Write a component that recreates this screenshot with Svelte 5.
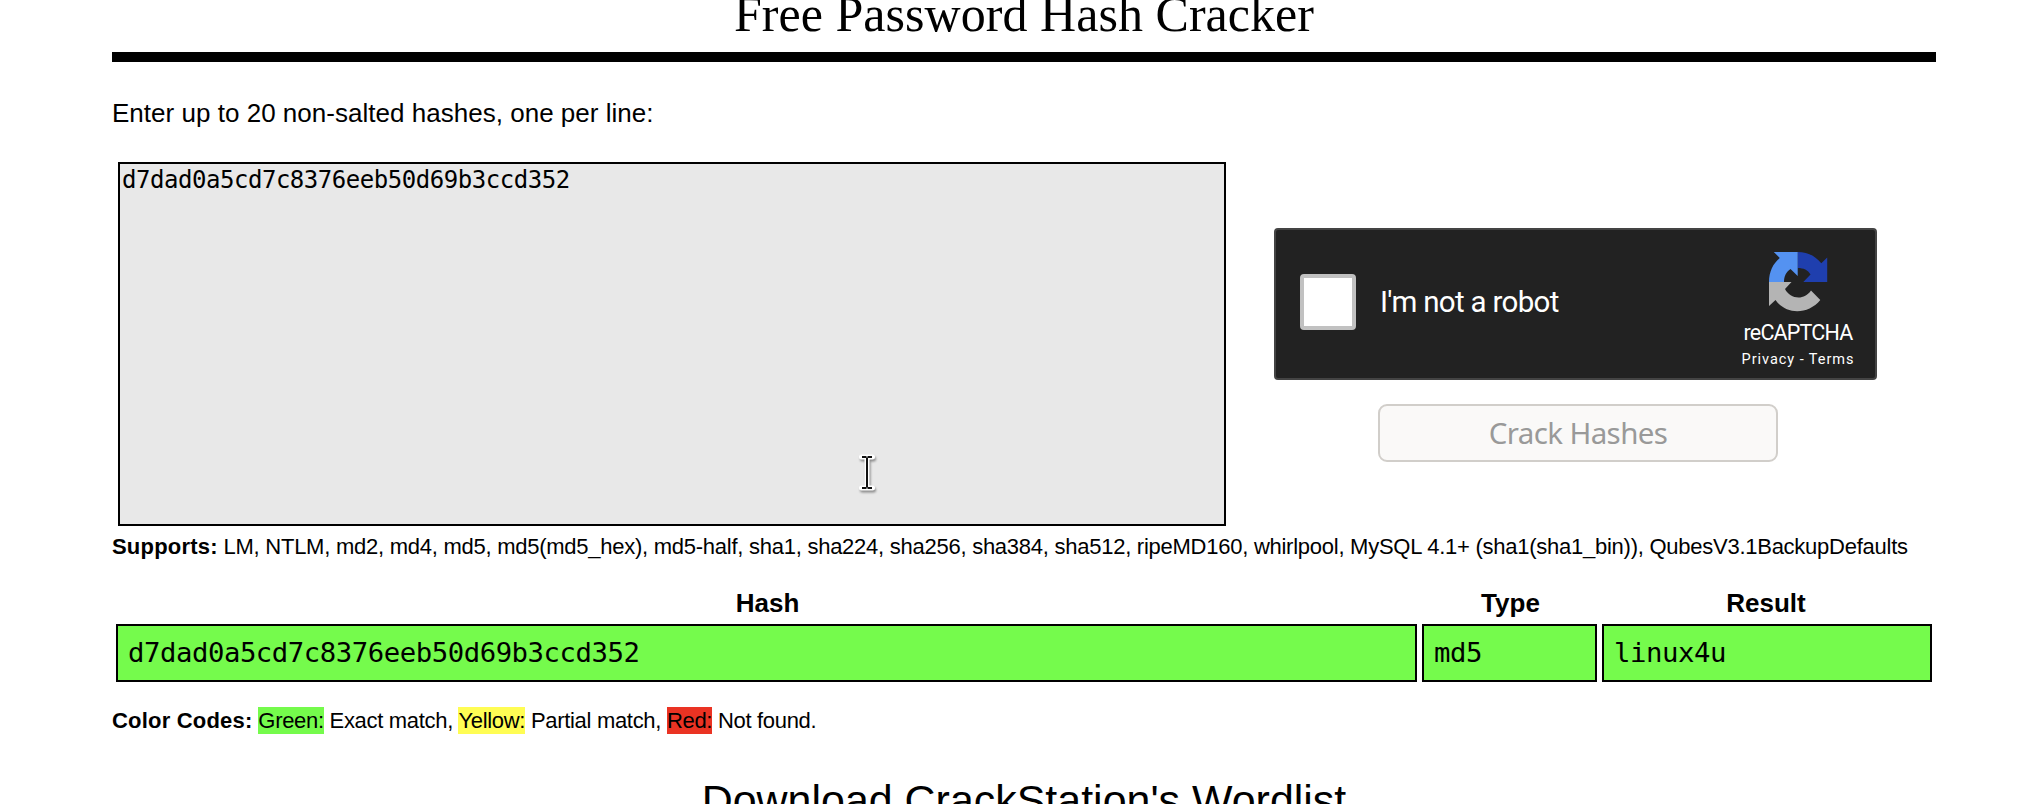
<script>
  const columns = ['Hash', 'Type', 'Result'];
  const row = ['d7dad0a5cd7c8376eeb50d69b3ccd352', 'md5', 'linux4u'];
</script>

<main>
  <h1>Free Password Hash Cracker</h1>
  <p class="intro">Enter up to 20 non-salted hashes, one per line:</p>

  <section class="entry">
    <div class="hashes">{row[0]}</div>
    <div class="side">
      <div class="captcha">
        <span class="box"></span>
        <span class="label">I'm not a robot</span>
        <div class="brand">
          <svg width="60" height="60" viewBox="0 0 60 60">
            <path fill="#1f3fae" d="M29.700 0C39 0 47 3.500 53.300 11.300L59.200 5.500V30H35.300L42.500 22.500C40 18 35.500 16 29.700 16Z" />
            <path fill="#5492f1" d="M29.700 0V24L22.500 17C18 20 16 24.500 16 30H1C1 20 5 11.500 11.800 6L5.800 0Z" />
            <path fill="#b4b4b4" d="M1 30H23.500L17 37C22 47 36 49 43 38.500L52.300 48C40 63 18 63 7.500 48L1 54Z" />
          </svg>
          <span class="name">reCAPTCHA</span>
          <span class="legal">Privacy - Terms</span>
        </div>
      </div>
      <button disabled>Crack Hashes</button>
    </div>
  </section>

  <p class="supports"><b>Supports:</b> LM, NTLM, md2, md4, md5, md5(md5_hex), md5-half, sha1, sha224, sha256, sha384, sha512, ripeMD160, whirlpool, MySQL 4.1+ (sha1(sha1_bin)), QubesV3.1BackupDefaults</p>

  <div class="results">
    {#each columns as column}<div class="head">{column}</div>{/each}
    {#each row as value}<div class="cell">{value}</div>{/each}
  </div>

  <p class="codes"><b>Color Codes:</b> <span class="green">Green:</span> Exact match, <span class="yellow">Yellow:</span> Partial match, <span class="red">Red:</span> Not found.</p>
  <h2>Download CrackStation's Wordlist</h2>

  <svg class="cursor" width="20" height="42" viewBox="0 0 20 42">
    <path d="M2.500 4H13.500M2.500 35H13.500M8 4V35" fill="none" stroke="#fff" stroke-width="5" stroke-linecap="round" />
    <path d="M3 4H7.500M8.500 4H13M3 35H7.500M8.500 35H13M8 4.500V34.500" fill="none" stroke="#111" stroke-width="2" />
  </svg>
</main>

<style>
  :global(body) { background: #fff; overflow: hidden; }
  main {
    position: relative;
    box-sizing: border-box;
    height: 804px;
    overflow: hidden;
    padding: 0 92px 0 112px;
    font-family: "Liberation Sans", Arial, sans-serif;
    color: #000;
    white-space: nowrap;
  }
  h1, h2, p { margin: 0; font-weight: 400; }
  h1 {
    box-sizing: border-box;
    height: 62px;
    margin-bottom: 36px;
    border-bottom: 10px solid #000;
    font: 50px/28px "Liberation Serif", serif;
    letter-spacing: 0.040px;
    text-align: center;
  }
  .intro { height: 64px; font-size: 26px; line-height: 30px; letter-spacing: 0.020px; }
  .entry { display: flex; gap: 48px; height: 364px; padding-left: 6px; }
  .hashes {
    box-sizing: border-box;
    width: 1108px;
    height: 364px;
    padding: 2px;
    border: 2px solid #000;
    background: #e8e8e8;
    font: 24px/28px "DejaVu Sans Mono", monospace;
    letter-spacing: -0.460px;
  }
  .side { width: 603px; padding-top: 66px; }
  .captcha {
    box-sizing: border-box;
    display: flex;
    align-items: flex-start;
    height: 152px;
    padding: 0 19px 0 24px;
    border: 2px solid #444;
    border-radius: 4px;
    background: #222;
    color: #fff;
    font-family: Roboto, sans-serif;
  }
  .box { box-sizing: border-box; width: 56px; height: 56px; margin-top: 44px; border: 4px solid #c1c1c1; border-radius: 4px; background: #fff; }
  .label { margin: 54px 0 0 24px; font-size: 29.500px; line-height: 36px; letter-spacing: -0.700px; }
  .brand { display: flex; flex-direction: column; align-items: center; width: 116px; height: 148px; margin-left: auto; }
  .brand svg { margin-top: 22px; flex: none; }
  .name { margin-top: 9px; font-size: 21.500px; line-height: 24px; letter-spacing: -0.800px; }
  .legal { margin-top: 5px; font-size: 14.500px; line-height: 20px; letter-spacing: 0.950px; }
  button {
    display: block;
    box-sizing: border-box;
    width: 400px;
    height: 58px;
    margin: 24px 0 0 104px;
    padding: 0;
    border: 2px solid #d1ceca;
    border-radius: 9px;
    background: #faf9f8;
    color: #999;
    font: 29.500px/54px "Noto Sans", sans-serif;
    letter-spacing: -0.600px;
  }
  .supports, .codes { box-sizing: border-box; font-size: 22px; letter-spacing: -0.255px; }
  .supports b, .codes b { letter-spacing: 0.200px; }
  .supports { height: 62px; padding-top: 7px; line-height: 28px; }
  .results { display: grid; grid-template-columns: 1301px 175px 330px; column-gap: 5px; padding-left: 4px; }
  .head { height: 36px; padding-left: 2px; font-size: 26px; font-weight: 700; line-height: 30px; text-align: center; }
  .head:nth-child(3) { padding: 0 2px 0 0; }
  .cell {
    box-sizing: border-box;
    height: 58px;
    padding-left: 10px;
    border: 2px solid #000;
    background: #75fb4c;
    font: 27.300px/53px "DejaVu Sans Mono", monospace;
    letter-spacing: -0.450px;
  }
  .codes { height: 93px; padding-top: 24px; line-height: 30px; letter-spacing: -0.310px; }
  .codes span { padding: 1px 0; }
  .green { background: #75fb4c; }
  .yellow { background: #fffd54; }
  .red { background: #ea3323; }
  h2 { font-size: 42.950px; line-height: 50px; text-align: center; }
  .cursor { position: absolute; left: 859px; top: 453px; filter: drop-shadow(1px 2px 1px rgba(0, 0, 0, 0.4)); }
</style>
